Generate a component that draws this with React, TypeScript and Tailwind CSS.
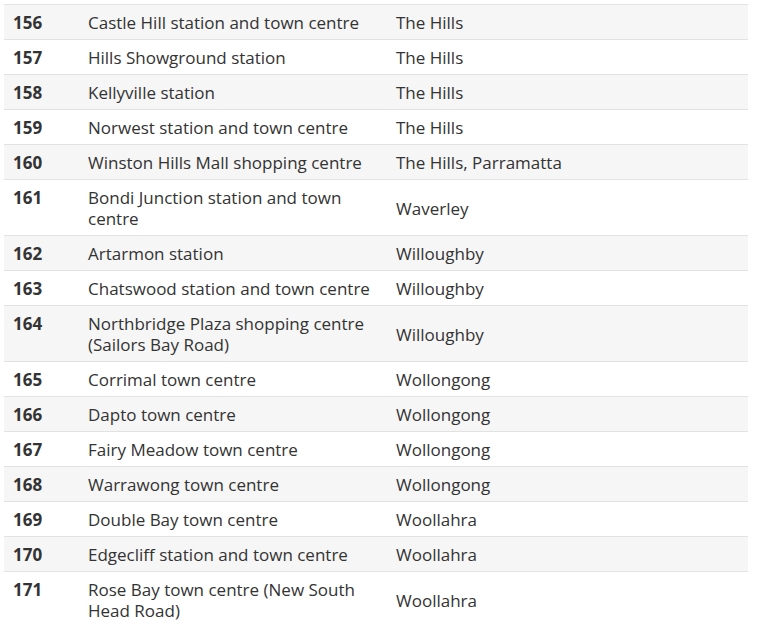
import React from 'react';

const rows: [string, string, string][] = [
  ['156', 'Castle Hill station and town centre', 'The Hills'],
  ['157', 'Hills Showground station', 'The Hills'],
  ['158', 'Kellyville station', 'The Hills'],
  ['159', 'Norwest station and town centre', 'The Hills'],
  ['160', 'Winston Hills Mall shopping centre', 'The Hills, Parramatta'],
  ['161', 'Bondi Junction station and town centre', 'Waverley'],
  ['162', 'Artarmon station', 'Willoughby'],
  ['163', 'Chatswood station and town centre', 'Willoughby'],
  ['164', 'Northbridge Plaza shopping centre (Sailors Bay Road)', 'Willoughby'],
  ['165', 'Corrimal town centre', 'Wollongong'],
  ['166', 'Dapto town centre', 'Wollongong'],
  ['167', 'Fairy Meadow town centre', 'Wollongong'],
  ['168', 'Warrawong town centre', 'Wollongong'],
  ['169', 'Double Bay town centre', 'Woollahra'],
  ['170', 'Edgecliff station and town centre', 'Woollahra'],
  ['171', 'Rose Bay town centre (New South Head Road)', 'Woollahra'],
];

export default function App() {
  return (
    <div className="min-h-screen bg-white pt-1 pl-1 font-['Open_Sans',sans-serif] text-[17px] leading-[21px] text-[#333]">
      <table className="w-[744px] table-fixed border-collapse border-t border-[#e2e2e2]">
        <colgroup>
          <col className="w-[74px]" />
          <col className="w-[308px]" />
          <col />
        </colgroup>
        <tbody>
          {rows.map(([num, place, council], i) => (
            <tr key={num} className={`border-b border-[#e2e2e2] ${i % 2 === 0 ? 'bg-[#f6f6f6]' : 'bg-white'}`}>
              <td className="pt-[7px] pb-[6px] pl-[9px] pr-2 align-top font-bold">{num}</td>
              <td className="pt-[7px] pb-[6px] pl-[10px] pr-[10px] align-top">{place}</td>
              <td className="pt-[7px] pb-[6px] pl-[10px] pr-[10px] align-middle">{council}</td>
            </tr>
          ))}
        </tbody>
      </table>
    </div>
  );
}
